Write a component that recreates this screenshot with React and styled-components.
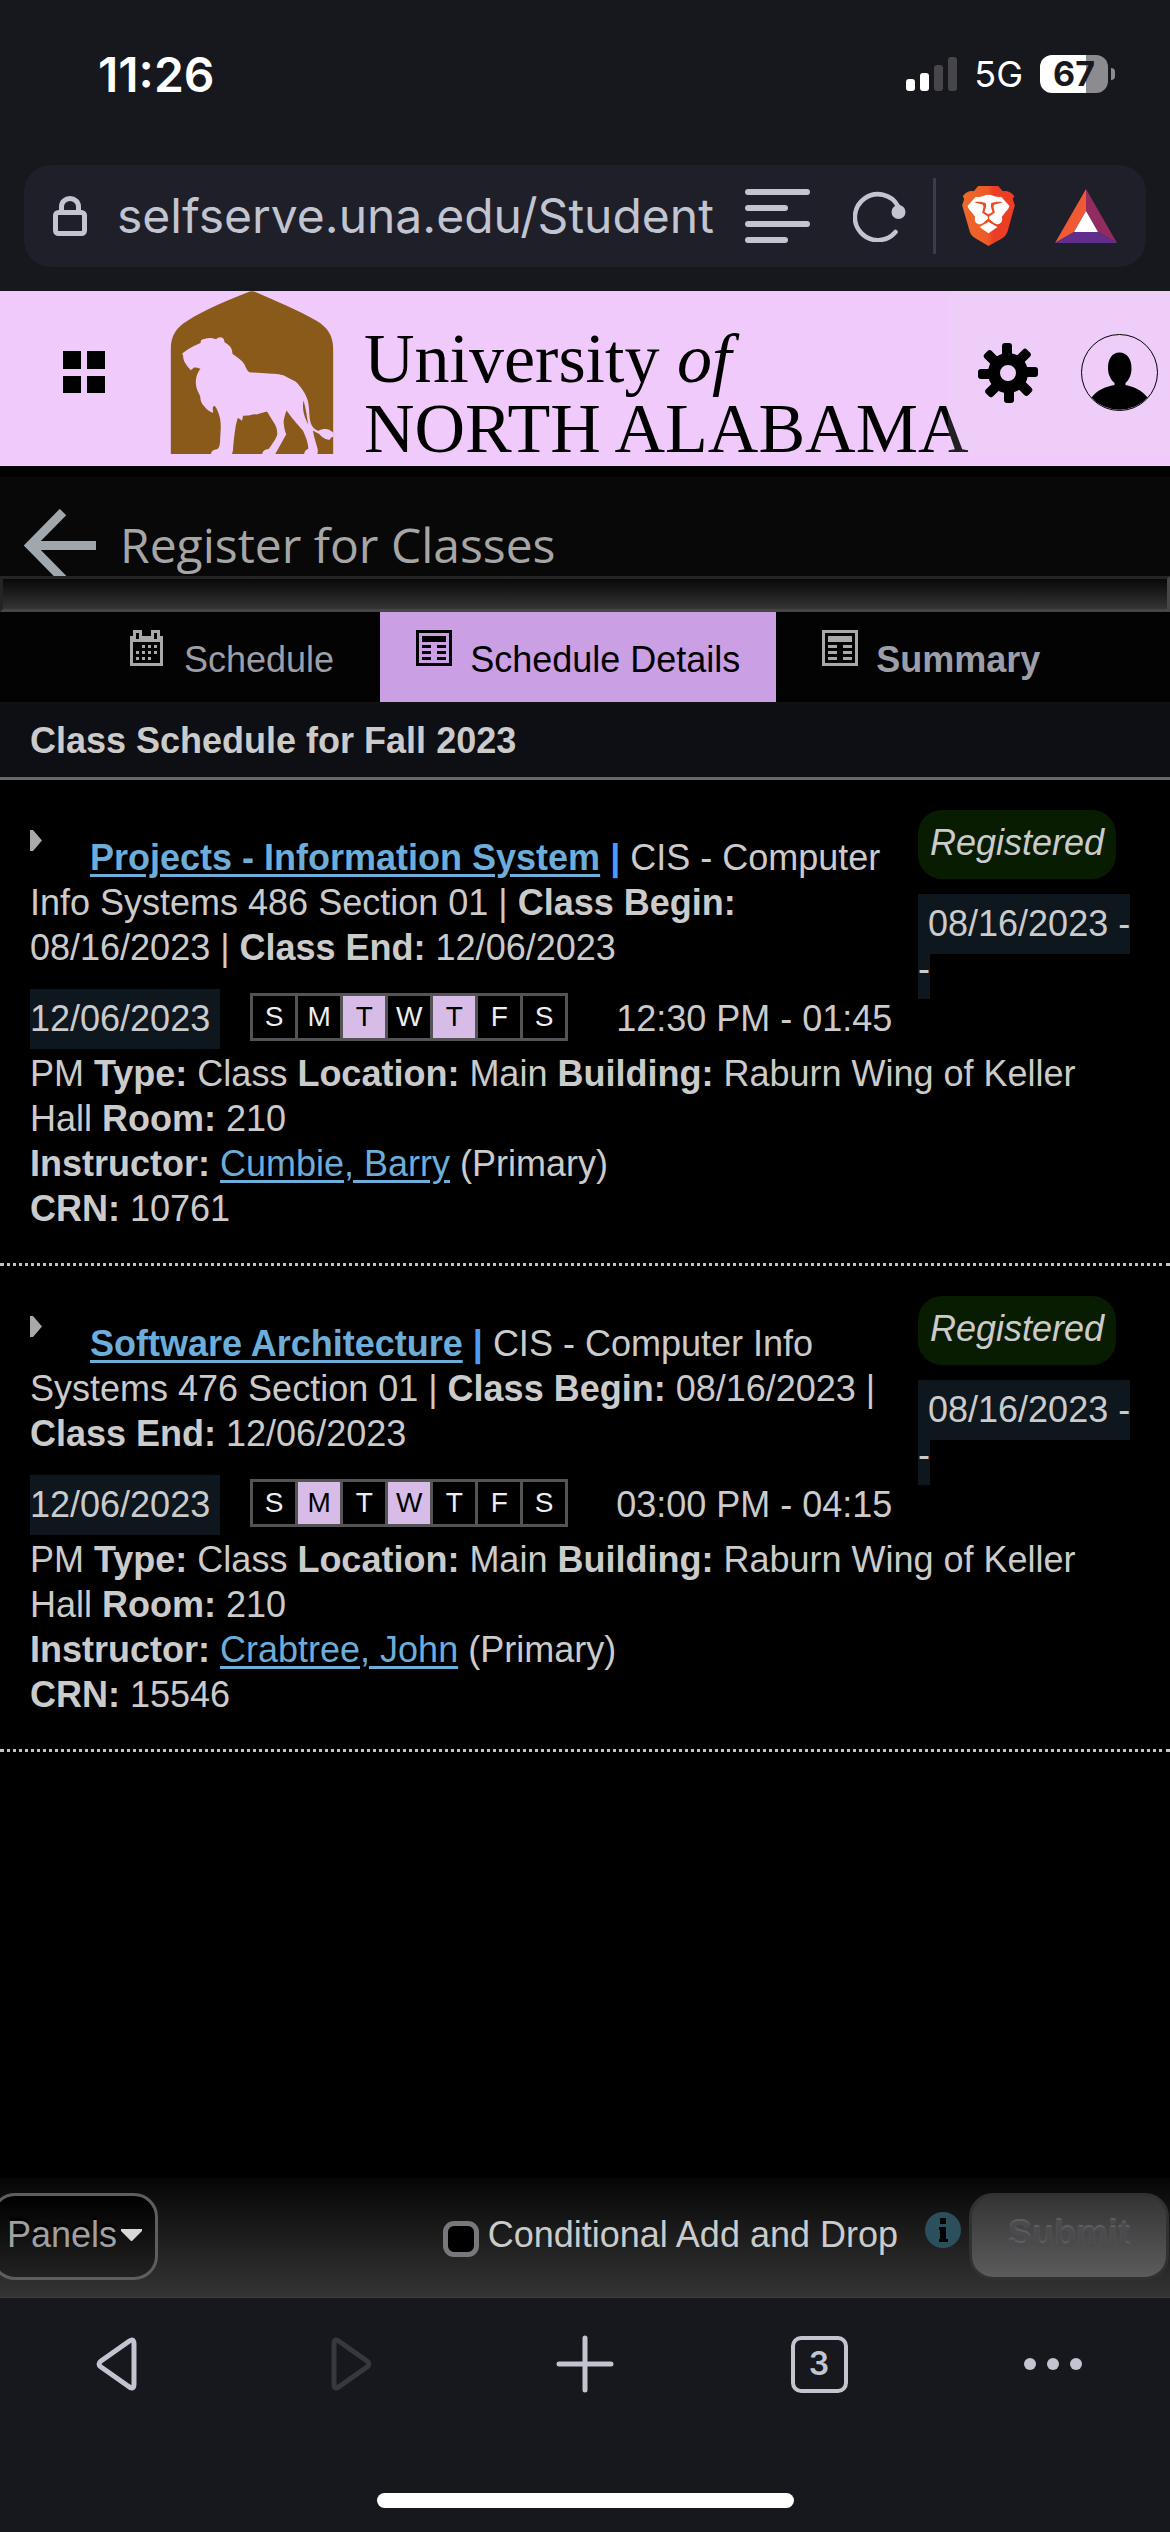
import React from "react";
import styled, { createGlobalStyle } from "styled-components";

const sans = `"Liberation Sans", Arial, sans-serif`;
const system = `Inter, "Liberation Sans", sans-serif`;

const GlobalStyle = createGlobalStyle`
  *, *::before, *::after { box-sizing: border-box; }
  body { margin: 0; background: #000; }
  button, input { font: inherit; color: inherit; margin: 0; }
  h1, h2, p, ul { margin: 0; padding: 0; }
  svg { display: block; flex: none; }
`;

const Page = styled.div`
  display: flex;
  flex-direction: column;
  min-height: 100vh;
  overflow-x: hidden;
  background: #000;
  color: #cbcbcb;
  font: 36px/45px ${sans};
`;

/* ---------- browser chrome ---------- */

const Chrome = styled.div`
  padding-bottom: 24px;
  background: #17181d;
  font-family: ${system};
`;

const StatusBar = styled.div`
  display: flex;
  align-items: center;
  justify-content: space-between;
  height: 165px;
  padding: 0 55px 17px 98px;
  color: #fff;
`;

const Clock = styled.time`
  font-size: 48px;
  font-weight: 600;
`;

const StatusIcons = styled.div`
  display: flex;
  align-items: center;
  gap: 17px;
`;

const Network = styled.span`
  font-size: 36px;
  font-weight: 400;
`;

const BatteryGroup = styled.div`
  display: flex;
  align-items: center;
  gap: 3px;
`;

const Battery = styled.span`
  width: 68px;
  height: 38px;
  border-radius: 12px;
  background: linear-gradient(90deg, #fff 67%, #8c8b90 67%);
  color: #17181d;
  font-size: 34px;
  font-weight: 700;
  line-height: 38px;
  text-align: center;
`;

const BatteryTip = styled.span`
  width: 4px;
  height: 12px;
  border-radius: 0 4px 4px 0;
  background: #8c8b90;
`;

const AddressBar = styled.div`
  display: flex;
  align-items: center;
  height: 102px;
  margin: 0 24px;
  padding: 0 29px;
  border-radius: 27px;
  background: #1f1f29;
`;

const Address = styled.input`
  flex: 1;
  min-width: 0;
  margin: 0 24px 0 30px;
  padding: 0;
  border: 0;
  outline: 0;
  background: none;
  color: #c2c4cf;
  font-size: 48px;
  line-height: 60px;
`;

const PlainButton = styled.button`
  display: flex;
  flex: none;
  align-items: center;
  justify-content: center;
  padding: 0;
  border: 0;
  background: none;
`;

const AddressTools = styled.div`
  display: flex;
  align-items: center;
  gap: 43px;
`;

const BrandTools = styled.div`
  display: flex;
  align-items: center;
  gap: 40px;
  height: 76px;
  margin-left: 27px;
  padding-left: 26px;
  border-left: 3px solid #3a3b4b;
`;

/* ---------- site header ---------- */

const SiteHeader = styled.header`
  display: flex;
  height: 175px;
  background: #f0cafa;
  color: #000;
`;

const MenuSlot = styled.div`
  display: flex;
  flex: none;
  width: 170px;
  padding: 60px 0 0 63px;
  align-items: flex-start;
`;

const Brand = styled.a`
  display: flex;
  flex: 1;
  min-width: 0;
  gap: 30px;
  color: #000;
  text-decoration: none;
  white-space: nowrap;
`;

const BrandName = styled.span`
  display: flex;
  flex-direction: column;
  padding-top: 33px;
  font: 70px/70px "Liberation Serif", "Times New Roman", serif;
`;

const UserTools = styled.div`
  display: flex;
  flex: none;
  align-items: center;
  gap: 43px;
  height: 163px;
  padding: 0 12px 0 30px;
  background: rgba(235, 225, 250, 0.14);
`;

/* ---------- page title and tabs ---------- */

const TitleBar = styled.div`
  display: flex;
  align-items: flex-start;
  gap: 24px;
  height: 99px;
  margin-top: 11px;
  padding: 32px 24px 0;
  overflow: hidden;
  background: #080808;
`;

const Title = styled.h1`
  padding-top: 9px;
  color: #a6a6a6;
  font: 400 48px/54px "Open Sans", sans-serif;
`;

const Trough = styled.div`
  height: 36px;
  border: 3px solid;
  border-color: #242424 #464646 #464646 #242424;
  background: linear-gradient(#080808, #343434);
`;

const Tabs = styled.nav`
  display: flex;
  gap: 10px;
  padding-left: 94px;
  background: #030303;
`;

const Tab = styled.button`
  display: flex;
  align-items: flex-start;
  gap: 18px;
  padding: 18px 36px 20px;
  border: 0;
  background: ${(p) => (p.$active ? "#cb9fe4" : "none")};
  color: ${(p) => (p.$active ? "#000" : "#9c9fa8")};
  font-weight: ${(p) => (p.$strong ? 700 : 400)};
  svg { color: ${(p) => (p.$active ? "#000" : "#a9a9a9")}; }
`;

const TabLabel = styled.span`
  padding-top: 7px;
`;

const TermHeading = styled.h2`
  padding: 13px 30px 14px;
  border-top: 3px solid #111;
  border-bottom: 3px solid #68696b;
  background: #0e0f14;
  font-size: 36px;
  line-height: 45px;
`;

/* ---------- schedule ---------- */

const Main = styled.main`
  flex: 1;
`;

const Course = styled.article`
  padding: 30px 30px 32px;
  border-bottom: 3px dotted #c4c4c4;
`;

const CourseTop = styled.div`
  display: flex;
  gap: 18px;
`;

const Summary = styled.p`
  flex: 1;
  min-width: 0;
  padding-top: 20px;
`;

const Expander = styled.button`
  display: inline-flex;
  width: 60px;
  height: 21px;
  padding: 0;
  border: 0;
  background: none;
  color: #a9a9a9;
  vertical-align: 19px;
`;

const TextLink = styled.a`
  color: #6dadd9;
  text-decoration-thickness: 3px;
  text-underline-offset: 4px;
`;

const Bar = styled.b`
  color: #4b9cfa;
`;

const Aside = styled.div`
  flex: none;
  width: 222px;
`;

const Badge = styled.em`
  display: block;
  width: 198px;
  margin-bottom: 22px;
  padding: 10px 0 14px;
  border-radius: 24px;
  background: #081c02;
  text-align: center;
`;

const DateMark = styled.span`
  padding: 9px 0 10px;
  background: #0f171e;
`;

const Meeting = styled.div`
  display: flex;
  align-items: flex-end;
  padding: 2px 0 10px;
`;

const Days = styled.ul`
  display: flex;
  gap: 3px;
  margin: 0 48px 0 30px;
  padding: 3px;
  background: #545456;
  list-style: none;
`;

const Day = styled.li`
  width: 42px;
  background: ${(p) => (p.$on ? "#d6bce6" : "#000")};
  color: ${(p) => (p.$on ? "#000" : "#eee")};
  font-size: 28px;
  line-height: 42px;
  text-align: center;
`;

/* ---------- action bar ---------- */

const ActionBar = styled.footer`
  display: flex;
  align-items: flex-start;
  justify-content: space-between;
  padding: 15px 1px 17px 0;
  border-bottom: 1px solid #3a3b4b;
  background: linear-gradient(#060606, #343434);
`;

const ActionButton = styled.button`
  display: flex;
  align-items: center;
  gap: 4px;
  padding: 16px 13px 20px;
  border: 3px solid #5e5e5e;
  border-radius: 24px;
  text-shadow: 0 -3px 2px #000;
`;

const PanelsButton = styled(ActionButton)`
  margin-left: -9px;
  background: linear-gradient(#000, #222);
  color: #a0a0a0;
`;

const SubmitButton = styled(ActionButton)`
  padding: 16px 36px 20px;
  border-color: #303132;
  background: linear-gradient(#343434, #5c5c5c);
  color: #4a4b4e;
  font-weight: 700;
  text-shadow: 0 -2px 1px #606060;
`;

const ActionGroup = styled.div`
  display: flex;
  gap: 8px;
`;

const Option = styled.div`
  display: flex;
  align-items: flex-start;
  gap: 27px;
  padding-top: 19px;
`;

const CheckLabel = styled.label`
  display: flex;
  align-items: flex-end;
  gap: 9px;
`;

const Checkbox = styled.input`
  width: 36px;
  height: 36px;
  border: 5px solid #77787b;
  border-radius: 11px;
  background: #000;
  appearance: none;
`;

/* ---------- browser toolbar ---------- */

const Toolbar = styled.nav`
  display: grid;
  grid-template-columns: repeat(5, 1fr);
  height: 132px;
  background: #17181d;
  color: #c2c4cf;
`;

const TabCount = styled.span`
  width: 57px;
  height: 57px;
  border: 4px solid;
  border-radius: 10px;
  font: 600 32px/48px ${system};
`;

const HomeArea = styled.div`
  display: flex;
  justify-content: center;
  padding: 63px 0 24px;
  background: #17181d;
`;

const HomeIndicator = styled.span`
  width: 417px;
  height: 15px;
  border-radius: 8px;
  background: #fff;
`;

/* ---------- drawings ---------- */

const Signal = () => (
  <svg width="51" height="34" viewBox="0 0 51 34" aria-hidden="true">
    <rect x="0" y="22" width="9" height="12" rx="3" fill="#fff" />
    <rect x="14" y="16" width="9" height="18" rx="3" fill="#fff" />
    <rect x="28" y="8" width="9" height="26" rx="3" fill="#47464b" />
    <rect x="42" y="0" width="9" height="34" rx="3" fill="#47464b" />
  </svg>
);

const Lock = () => (
  <svg width="34" height="40" viewBox="0 0 34 40" fill="none" stroke="#c2c4cf" strokeWidth="5" aria-hidden="true">
    <rect x="2.5" y="16.5" width="29" height="21" rx="3" />
    <path d="M8.5 16V10.500a8.500 8 0 0 1 17 0V16" />
  </svg>
);

const Reader = () => (
  <svg width="65" height="54" viewBox="0 0 65 54" stroke="#c2c4cf" strokeWidth="6" strokeLinecap="round" aria-hidden="true">
    <path d="M3 3H62M3 19H40M3 35H62M3 51H40" />
  </svg>
);

const Reload = () => (
  <svg width="53" height="52" viewBox="0 0 53 52" fill="none" aria-hidden="true">
    <path d="M45 16A23 23 0 1 0 42.500 42" stroke="#c2c4cf" strokeWidth="4.500" strokeLinecap="round" />
    <circle cx="45.500" cy="22" r="7" fill="#c2c4cf" />
  </svg>
);

const LionShield = () => (
  <svg width="53" height="60" viewBox="696 438 158 180" aria-hidden="true">
    <defs>
      <linearGradient id="shield">
        <stop offset="0" stopColor="#ec6a2c" />
        <stop offset="0.480" stopColor="#ee5a28" />
        <stop offset="0.600" stopColor="#ec3d25" />
      </linearGradient>
    </defs>
    <path
      fill="url(#shield)"
      d="M744 438H804L818 454C830 451 842 456 852 468L848 478L854 496L832 575C828 585 822 591 814 596L775 618L738 596C728 590 722 585 719 575L696 496L702 478L698 468C708 456 720 451 731 454Z"
    />
    <path
      fill="#fff"
      d="M737 470C752 474 762 464 775 464C788 464 800 474 813 470L838 498C834 510 828 512 822 521L815 530C819 544 812 552 800 553C790 549 783 544 775 536C767 544 760 549 750 553C738 552 731 544 735 530L728 521C722 512 716 510 712 498ZM748 561L775 546L802 561L775 580Z"
    />
    <path
      fill="#ec4f27"
      d="M732 487C745 484 758 486 767 490L768 500L763 516L775 523L787 516L782 500L783 490C792 486 805 484 818 487L792 494L790 500L794 518L775 531L756 518L760 500L758 494Z"
    />
    <path d="M775 528V540M762 548L775 538L788 548" stroke="#ec4f27" strokeWidth="4" fill="none" />
  </svg>
);

const Triangle = () => (
  <svg width="62" height="54" viewBox="0 0 62 54" aria-hidden="true">
    <path d="M31 0L0 54L19 43L31 22Z" fill="#ef5a35" />
    <path d="M31 0L62 54L43 43L31 22Z" fill="#922c60" />
    <path d="M0 54H62L43 43H19Z" fill="#602f8d" />
    <path d="M31 22L43 43H19Z" fill="#fff" />
  </svg>
);

const Squares = () => (
  <svg width="42" height="42" viewBox="0 0 42 42" aria-hidden="true">
    <path d="M0 0H18V18H0ZM24 0H42V18H24ZM0 25H18V42H0ZM24 25H42V42H24Z" />
  </svg>
);

const LionCrest = () => (
  <svg width="164" height="163" viewBox="60 17 490 490" aria-hidden="true">
    <path
      fill="#8a5a1b"
      d="M61 507V190C61 150 80 125 110 107C165 72 240 42 293 21Q305 14 317 21C370 45 445 75 500 107C530 125 549 150 549 190V507Z"
    />
    <path
      fill="#f0cafa"
      d="M95 205L113 192L130 182L150 173L152 165C165 158 180 155 197 162C203 156 213 153 220 161L223 172C235 178 247 188 246 206C262 218 275 225 283 239C287 250 291 257 297 261L355 265C380 266 395 268 405 273L437 290C452 305 468 328 473 348C479 375 476 395 481 412C486 427 495 434 505 437C515 431 528 430 537 434C543 438 548 441 550 444V455C545 456 541 458 539 464C528 466 516 458 507 447C500 443 494 440 488 436C492 460 500 480 503 495L502 507H462C462 498 468 494 474 491C475 478 467 455 458 436C440 415 425 400 409 376C404 390 400 402 400 412C402 428 404 438 408 448L375 507H336C337 498 342 494 356 491C365 478 378 462 381 448C381 430 376 420 369 410L350 379C335 383 325 386 318 388C308 386 300 392 292 391L278 392L275 408L269 402L262 399C259 412 256 420 255 430C251 455 249 480 248 495L245 507H182C183 498 188 495 200 493C207 488 208 480 209 470C210 440 213 425 209 400C205 385 200 370 193 363C189 362 187 365 187 370L188 383C180 380 170 375 162 364C152 355 150 345 149 332C142 318 137 310 136 292C137 272 142 262 150 251C140 248 133 246 130 248L121 255L113 246C106 237 98 228 98 212Z"
    />
    <path fill="#8a5a1b" d="M460 346C456 365 458 388 474 418C470 395 467 370 460 346Z" />
  </svg>
);

const Gear = () => (
  <svg width="60" height="60" viewBox="0 0 60 60" aria-hidden="true">
    <circle cx="30" cy="30" r="14" fill="none" stroke="#000" strokeWidth="12" />
    {[0, 45, 90, 135, 180, 225, 270, 315].map((angle) => (
      <rect key={angle} x="24" y="0" width="10" height="15" rx="3" transform={`rotate(${angle} 30 30)`} />
    ))}
  </svg>
);

const Person = () => (
  <svg width="77" height="77" viewBox="0 0 77 77" aria-hidden="true">
    <circle cx="38.500" cy="38.500" r="38" fill="none" stroke="#000" />
    <path d="M38.500 18.500C31 18.500 27 25 27 34C27 41 30 46 33.500 49V51C24 53 16 56 10.500 63.500A38 38 0 0 0 66.500 63.500C61 56 53 53 44.500 51V49C48 46 50.500 41 50.500 34C50.500 25 46 18.500 38.500 18.500Z" />
  </svg>
);

const BackArrow = () => (
  <svg width="72" height="67" viewBox="0 0 72 67" fill="none" stroke="#a0a8ae" strokeWidth="9" aria-hidden="true">
    <path d="M39 3L6 36.500L39 70M5 36.500H72" />
  </svg>
);

const CalendarIcon = () => (
  <svg width="36" height="36" viewBox="0 0 36 36" fill="currentColor" aria-hidden="true">
    <path fillRule="evenodd" d="M0 6H3V0H12V6H21V0H30V6H33V36H0ZM3 12V33H30V12ZM6 3V9H9V3ZM24 3V9H27V3Z" />
    <path d="M12 15h3v3h-3zM18 15h3v3h-3zM24 15h3v3h-3zM6 21h3v3H6zM12 21h3v3h-3zM18 21h3v3h-3zM24 21h3v3h-3zM6 27h3v3H6zM12 27h3v3h-3zM18 27h3v3h-3z" />
  </svg>
);

const SheetIcon = () => (
  <svg width="36" height="36" viewBox="0 0 36 36" fill="currentColor" aria-hidden="true">
    <path fillRule="evenodd" d="M0 0H36V36H0ZM3 3V33H33V3Z" />
    <path d="M6 6H30V12H6ZM6 15H15V18H6ZM21 15H30V18H21ZM6 21H15V24H6ZM21 21H30V24H21ZM6 27H15V30H6ZM21 27H30V30H21Z" />
  </svg>
);

const InfoIcon = () => (
  <svg width="36" height="36" viewBox="0 0 36 36" role="img" aria-label="More information">
    <circle cx="18" cy="18" r="18" fill="#2b505c" />
    <path d="M15 6H21V12H15ZM14 15H21V27H23V30H14V27H15V18H14Z" fill="#000" />
  </svg>
);

const Play = ({ flip }) => (
  <svg width="42" height="54" viewBox="0 0 42 54" fill="none" stroke={flip ? "#c2c4cf" : "#37383d"} strokeWidth="5" strokeLinejoin="round" aria-hidden="true">
    <path
      transform={flip ? "translate(42 0) scale(-1 1)" : undefined}
      d="M4 7Q4 0 10 5L37 24Q41 27 37 30L10 49Q4 54 4 47Z"
    />
  </svg>
);

const Plus = () => (
  <svg width="58" height="58" viewBox="0 0 58 58" stroke="#c2c4cf" strokeWidth="5" strokeLinecap="round" aria-hidden="true">
    <path d="M29 3V55M3 29H55" />
  </svg>
);

const Dots = () => (
  <svg width="58" height="12" viewBox="0 0 58 12" fill="#c2c4cf" aria-hidden="true">
    <circle cx="6" cy="6" r="6" />
    <circle cx="29" cy="6" r="6" />
    <circle cx="52" cy="6" r="6" />
  </svg>
);

/* ---------- data ---------- */

const courses = [
  {
    title: "Projects - Information System",
    subject: "CIS - Computer Info Systems 486 Section 01",
    days: [2, 4],
    time: "12:30 PM - 01:45",
    instructor: "Cumbie, Barry",
    crn: "10761",
  },
  {
    title: "Software Architecture",
    subject: "CIS - Computer Info Systems 476 Section 01",
    days: [1, 3],
    time: "03:00 PM - 04:15",
    instructor: "Crabtree, John",
    crn: "15546",
  },
];

const weekdays = ["S", "M", "T", "W", "T", "F", "S"];

function CourseEntry({ course }) {
  return (
    <Course>
      <CourseTop>
        <Summary>
          <Expander type="button" aria-label={`Expand ${course.title}`}>
            <svg width="12" height="21" viewBox="0 0 12 21" fill="currentColor" aria-hidden="true">
              <path d="M0 0H3L12 10.500L3 21H0Z" />
            </svg>
          </Expander>
          <b><TextLink href="#course">{course.title}</TextLink></b> <Bar>|</Bar> {course.subject} |{" "}
          <b>Class Begin:</b> 08/16/2023 | <b>Class End:</b> 12/06/2023
        </Summary>
        <Aside>
          <Badge>Registered</Badge>
          <DateMark>{"\u00a008/16/2023 - -"}</DateMark>
        </Aside>
      </CourseTop>
      <Meeting>
        <div>
          <DateMark>{"12/06/2023\u00a0"}</DateMark>
        </div>
        <Days>
          {weekdays.map((day, i) => (
            <Day key={i} $on={course.days.includes(i)}>{day}</Day>
          ))}
        </Days>
        <span>{course.time}</span>
      </Meeting>
      <p>
        PM <b>Type:</b> Class <b>Location:</b> Main <b>Building:</b> Raburn Wing of Keller Hall <b>Room:</b> 210
      </p>
      <p>
        <b>Instructor:</b> <TextLink href="#instructor">{course.instructor}</TextLink> (Primary)
      </p>
      <p>
        <b>CRN:</b> {course.crn}
      </p>
    </Course>
  );
}

export default function App() {
  return (
    <Page>
      <GlobalStyle />
      <Chrome>
        <StatusBar>
          <Clock>11:26</Clock>
          <StatusIcons>
            <Signal />
            <Network>5G</Network>
            <BatteryGroup>
              <Battery>67</Battery>
              <BatteryTip />
            </BatteryGroup>
          </StatusIcons>
        </StatusBar>
        <AddressBar>
          <Lock />
          <Address aria-label="Address" defaultValue="selfserve.una.edu/Student" />
          <AddressTools>
            <PlainButton type="button" aria-label="Reader mode"><Reader /></PlainButton>
            <PlainButton type="button" aria-label="Reload"><Reload /></PlainButton>
          </AddressTools>
          <BrandTools>
            <PlainButton type="button" aria-label="Shields"><LionShield /></PlainButton>
            <PlainButton type="button" aria-label="Rewards"><Triangle /></PlainButton>
          </BrandTools>
        </AddressBar>
      </Chrome>

      <SiteHeader>
        <MenuSlot>
          <PlainButton type="button" aria-label="Menu"><Squares /></PlainButton>
        </MenuSlot>
        <Brand href="#home">
          <LionCrest />
          <BrandName>
            <span>University <i>of</i></span>
            <span>NORTH ALABAMA</span>
          </BrandName>
        </Brand>
        <UserTools>
          <PlainButton type="button" aria-label="Settings"><Gear /></PlainButton>
          <PlainButton type="button" aria-label="Account"><Person /></PlainButton>
        </UserTools>
      </SiteHeader>

      <TitleBar>
        <PlainButton type="button" aria-label="Back"><BackArrow /></PlainButton>
        <Title>Register for Classes</Title>
      </TitleBar>
      <Trough />
      <Tabs>
        <Tab type="button"><CalendarIcon /><TabLabel>Schedule</TabLabel></Tab>
        <Tab type="button" $active><SheetIcon /><TabLabel>Schedule Details</TabLabel></Tab>
        <Tab type="button" $strong><SheetIcon /><TabLabel>Summary</TabLabel></Tab>
      </Tabs>
      <TermHeading>Class Schedule for Fall 2023</TermHeading>

      <Main>
        {courses.map((course) => (
          <CourseEntry key={course.crn} course={course} />
        ))}
      </Main>

      <ActionBar>
        <PanelsButton type="button">
          Panels
          <svg width="21" height="12" viewBox="0 0 21 12" fill="#d8d8d8" aria-hidden="true">
            <path d="M0 0H21V2L11 12H10L0 2Z" />
          </svg>
        </PanelsButton>
        <ActionGroup>
          <Option>
            <CheckLabel>
              <Checkbox type="checkbox" />
              Conditional Add and Drop
            </CheckLabel>
            <InfoIcon />
          </Option>
          <SubmitButton type="submit" disabled>Submit</SubmitButton>
        </ActionGroup>
      </ActionBar>

      <Toolbar>
        <PlainButton type="button" aria-label="Go back"><Play flip /></PlainButton>
        <PlainButton type="button" aria-label="Go forward" disabled><Play /></PlainButton>
        <PlainButton type="button" aria-label="New tab"><Plus /></PlainButton>
        <PlainButton type="button" aria-label="Open tabs"><TabCount>3</TabCount></PlainButton>
        <PlainButton type="button" aria-label="More"><Dots /></PlainButton>
      </Toolbar>
      <HomeArea><HomeIndicator /></HomeArea>
    </Page>
  );
}
